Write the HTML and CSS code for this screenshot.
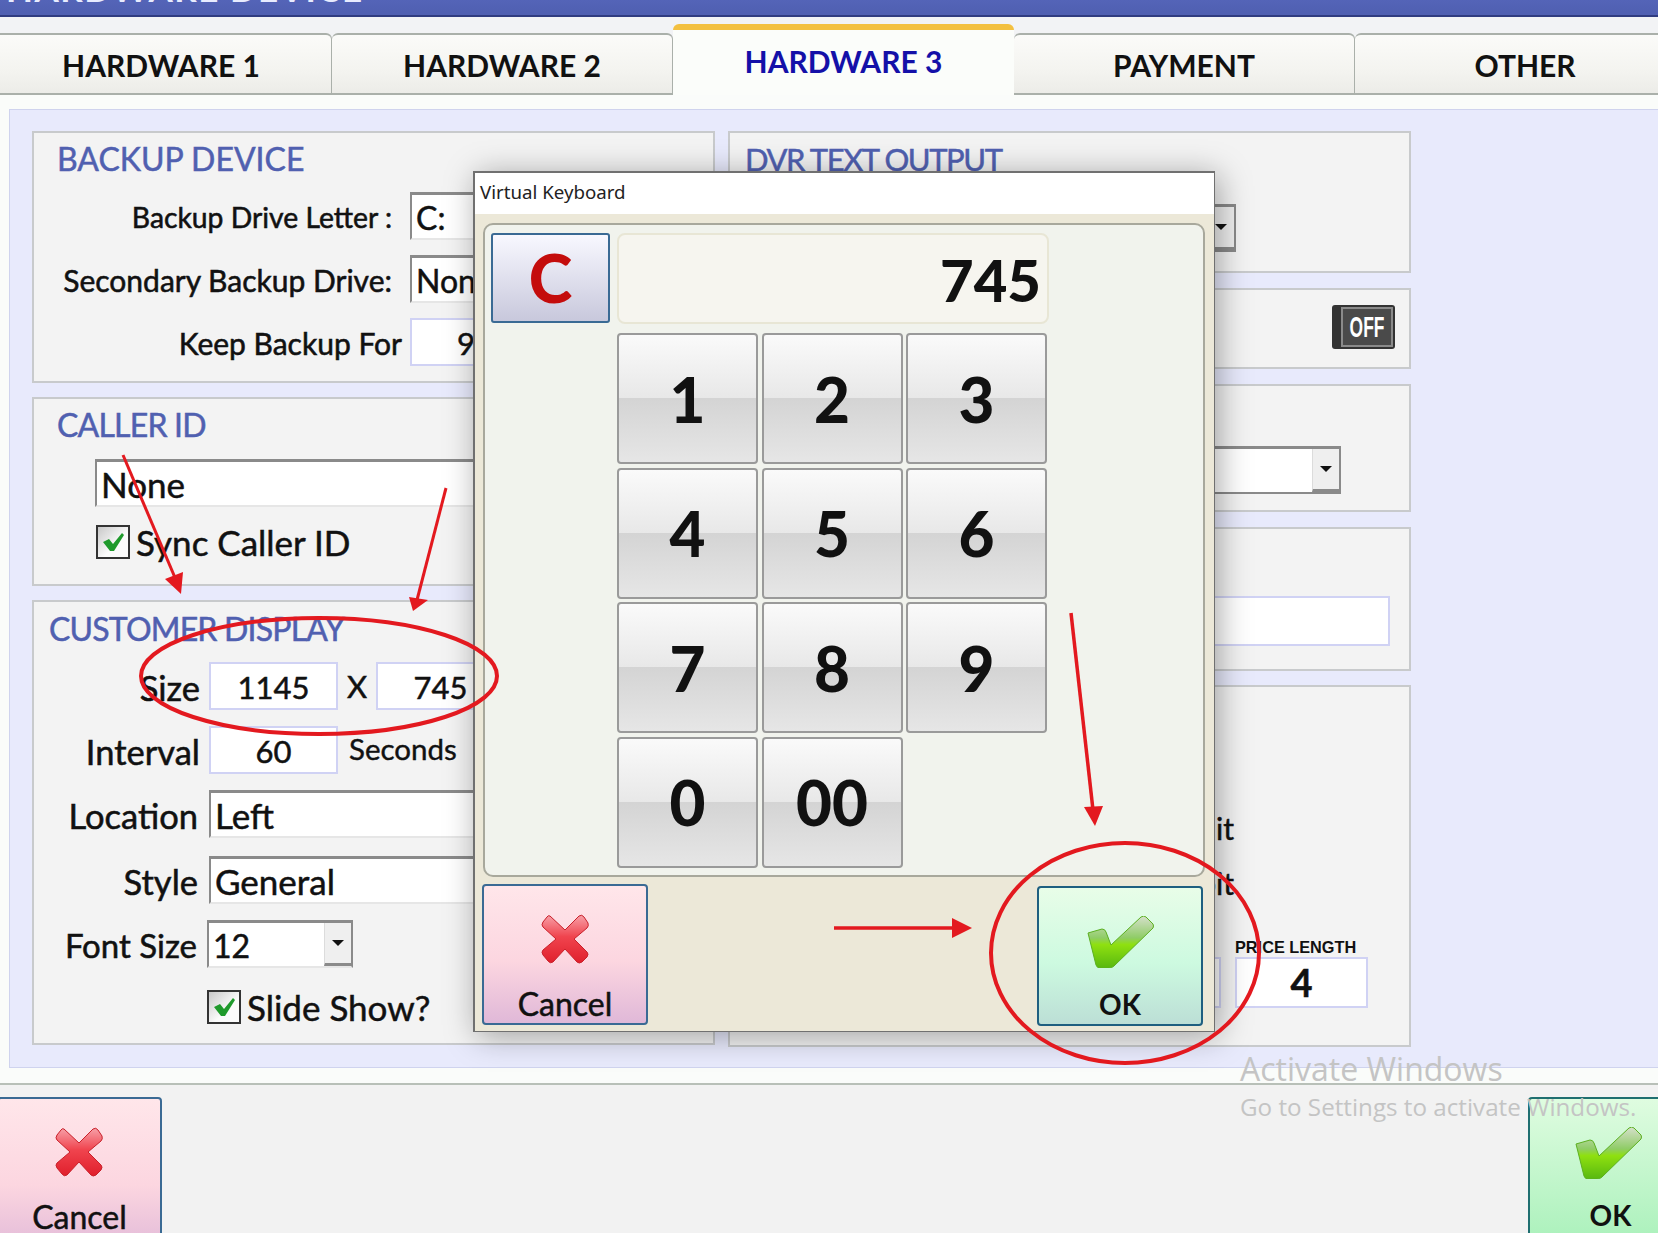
FILE: index.html
```html
<!DOCTYPE html>
<html lang="en">
<head>
<meta charset="utf-8">
<title>Hardware Settings</title>
<link rel="stylesheet" href="styles.css">
</head>
<body>
<svg class="defs" width="0" height="0" aria-hidden="true">
  <defs>
    <linearGradient id="gx" x1="0" y1="0" x2="0" y2="1">
      <stop offset="0" stop-color="#f7a0a8"/><stop offset=".45" stop-color="#f0444e"/><stop offset="1" stop-color="#e01f2c"/>
    </linearGradient>
    <linearGradient id="gc" x1="0" y1="0" x2="0" y2="1">
      <stop offset="0" stop-color="#d6e0cc"/><stop offset=".42" stop-color="#8fcc66"/><stop offset=".55" stop-color="#8fe010"/><stop offset="1" stop-color="#58b810"/>
    </linearGradient>
    <symbol id="ix" viewBox="0 0 48 50">
      <path d="M9 2 L24 16 L38 2 Q41 0 43 3 L47 9 Q48 12 46 14 L33 25 L46 38 Q48 40 46 43 L41 48 Q38 50 36 48 L24 35 L12 48 Q9 50 7 47 L2 41 Q0 38 2 36 L15 25 L2 13 Q0 11 2 8 L6 3 Q7 1 9 2 Z" fill="url(#gx)" stroke="#c8202a" stroke-width="1"/>
    </symbol>
    <symbol id="ic" viewBox="0 0 67 52">
      <path d="M1 17 L15 13 Q18 13 19 16 L24 29 L54 1 Q57 -1 59 1 L66 8 Q67 10 66 12 L27 50 Q25 52 22 52 L13 52 Q10 52 9 49 Z" fill="url(#gc)" stroke="#5cb020" stroke-width="1"/>
    </symbol>
    <symbol id="ick" viewBox="0 0 24 22">
      <path d="M2 11 L8 8 L12 13 L21 2 L23 4 L13 20 L9 20 Z" fill="#1f9a2c"/>
    </symbol>
  </defs>
</svg>

<header class="topbar"><span class="topbar-title">HARDWARE DEVICE</span></header>

<nav class="tabs">
  <div class="tab">HARDWARE 1</div>
  <div class="tab">HARDWARE 2</div>
  <div class="tab tab-active">HARDWARE 3</div>
  <div class="tab">PAYMENT</div>
  <div class="tab">OTHER</div>
</nav>

<main class="content">
  <div class="panel">
    <div class="col">
      <section class="box box-backup">
        <h2 class="box-title">BACKUP DEVICE</h2>
        <div class="stack">
          <div class="row row-tall">
            <span class="lbl lbl-wide lbl-inset lbl-first">Backup Drive Letter :</span>
            <span class="select select-long">C:</span>
          </div>
          <div class="row row-tall">
            <span class="lbl lbl-wide lbl-inset lbl-big">Secondary Backup Drive:</span>
            <span class="select select-long">None</span>
          </div>
          <div class="row row-tall">
            <span class="lbl lbl-wide lbl-big">Keep Backup For</span>
            <span class="field field-long">90</span>
          </div>
        </div>
      </section>

      <section class="box box-caller">
        <h2 class="box-title title-tight">CALLER ID</h2>
        <span class="select select-caller select-lg">None</span>
        <label class="check check-caller">
          <span class="checkbox"><svg class="tick"><use href="#ick"/></svg></span>
          <span class="check-text">Sync Caller ID</span>
        </label>
      </section>

      <section class="box box-customer">
        <h2 class="box-title box-title-near title-tight">CUSTOMER DISPLAY</h2>
        <div class="row">
          <span class="lbl lbl-sm">Size</span>
          <span class="field">1145</span>
          <span class="times">X</span>
          <span class="field">745</span>
        </div>
        <div class="row mt16">
          <span class="lbl lbl-sm">Interval</span>
          <span class="field">60</span>
          <span class="seconds">Seconds</span>
        </div>
        <div class="row mt16">
          <span class="lbl lbl-sm lbl-pad">Location</span>
          <span class="select select-long select-lg">Left</span>
        </div>
        <div class="row mt18">
          <span class="lbl lbl-sm lbl-pad">Style</span>
          <span class="select select-long select-lg">General</span>
        </div>
        <div class="row mt16">
          <span class="lbl lbl-sm lbl-pad lbl-font">Font Size</span>
          <span class="select select-font">12<span class="drop"><i class="caret"></i></span></span>
        </div>
        <label class="check check-slide">
          <span class="checkbox"><svg class="tick"><use href="#ick"/></svg></span>
          <span class="check-text">Slide Show?</span>
        </label>
      </section>
    </div>

    <div class="col col-right">
      <section class="box box-dvr">
        <h2 class="box-title box-title-near title-dvr">DVR TEXT OUTPUT</h2>
        <div class="end">
          <span class="select select-wide"><span class="drop"><i class="caret"></i></span></span>
        </div>
      </section>
      <section class="box box-toggle">
        <div class="toggle"><span class="toggle-face"><span class="toggle-text">OFF</span></span></div>
      </section>
      <section class="box box-sel">
        <span class="select select-wide"><span class="drop"><i class="caret"></i></span></span>
      </section>
      <section class="box box-text">
        <span class="field field-wide"></span>
      </section>
      <section class="box box-misc">
        <div class="misc-line">Credit</div>
        <div class="misc-line misc-line-2">Debit</div>
        <div class="price-row">
          <span class="field field-price"></span>
          <div class="price">
            <div class="price-label">PRICE LENGTH</div>
            <span class="field field-four">4</span>
          </div>
        </div>
      </section>
    </div>
  </div>
</main>

<footer class="footer">
  <button class="btn btn-cancel btn-foot-left"><svg class="ico-x"><use href="#ix"/></svg><span>Cancel</span></button>
  <button class="btn btn-ok-foot btn-foot-right"><svg class="ico-c"><use href="#ic"/></svg><span class="ok-text">OK</span></button>
</footer>

<div class="activate">
  <div class="activate-1">Activate Windows</div>
  <div class="activate-2">Go to Settings to activate Windows.</div>
</div>

<div class="dialog">
  <div class="dialog-title">Virtual Keyboard</div>
  <div class="pad">
    <button class="key-c">C</button>
    <div class="pad-main">
      <div class="display">745</div>
      <div class="keys">
        <button class="key">1</button><button class="key">2</button><button class="key">3</button>
        <button class="key">4</button><button class="key">5</button><button class="key">6</button>
        <button class="key">7</button><button class="key">8</button><button class="key">9</button>
        <button class="key">0</button><button class="key">00</button>
      </div>
    </div>
  </div>
  <div class="dialog-actions">
    <button class="btn btn-cancel btn-dlg"><svg class="ico-x"><use href="#ix"/></svg><span>Cancel</span></button>
    <button class="btn btn-ok btn-dlg"><svg class="ico-c"><use href="#ic"/></svg><span class="ok-text">OK</span></button>
  </div>
</div>

<svg class="marks" width="1658" height="1233" viewBox="0 0 1658 1233" aria-hidden="true">
  <g fill="none" stroke="#e3191f">
    <ellipse cx="319" cy="676" rx="178" ry="58" stroke-width="4"/>
    <ellipse cx="1125" cy="953" rx="134" ry="110" stroke-width="4"/>
    <path d="M123 455 L176 580" stroke-width="3"/>
    <path d="M446 488 L417 600" stroke-width="3"/>
    <path d="M1071 613 L1093 810" stroke-width="3.5"/>
    <path d="M834 928 L955 928" stroke-width="3.5"/>
  </g>
  <g fill="#e3191f">
    <path d="M181 594 L165 579 L183 572 Z"/>
    <path d="M413 611 L409 597 L428 600 Z"/>
    <path d="M1095 826 L1084 807 L1103 806 Z"/>
    <path d="M972 928 L952 918 L952 938 Z"/>
  </g>
</svg>
</body>
</html>
```
FILE: styles.css
```css
* { box-sizing: border-box; }
html, body { margin: 0; padding: 0; }
body {
  width: 1658px;
  height: 1233px;
  overflow: hidden;
  position: relative;
  background: #f2f2f2;
  font-family: "Lato", "Liberation Sans", sans-serif;
  color: #111;
}
.defs { position: absolute; }

.topbar {
  height: 17px;
  background: linear-gradient(#5464b8, #5060b2 80%);
  border-bottom: 2px solid #303c80;
  overflow: hidden;
  padding-left: 6px;
}
.topbar-title {
  display: block;
  margin-top: -27px;
  font-size: 35px;
  line-height: 30px;
  font-weight: 700;
  letter-spacing: 1.5px;
  color: #e8ecff;
}

.tabs {
  height: 78px;
  display: flex;
  align-items: flex-end;
  margin-left: -9px;
  background: #f2f3f5;
}
.tab {
  flex: 0 0 341px;
  height: 62px;
  border: 1px solid #aab0aa;
  border-width: 2px 1px 2px 0;
  border-radius: 6px 6px 0 0;
  background: linear-gradient(#fbfbf9, #f4f4f0 60%, #ecece8);
  font-size: 30px;
  font-weight: 700;
  line-height: 60px;
  text-align: center;
  color: #111;
}
.tab-active {
  height: 71px;
  background: #fbfdfa;
  border: 0;
  border-top: 6px solid #f3c040;
  color: #1410a8;
  line-height: 62px;
}

.content {
  height: 988px;
  background: #fafcfa;
  padding: 14px 0 15px 9px;
}
.panel {
  height: 959px;
  background: #e8eafc;
  border: 1px solid #cfd3ee;
  border-right: 0;
  padding: 21px 0 0 22px;
  display: flex;
  gap: 13px;
}
.col { width: 683px; display: flex; flex-direction: column; gap: 14px; flex: none; }
.col-right { gap: 15px; }

.box {
  background: #f3f3f3;
  border: 2px solid #c8cacc;
  padding: 7px 0 0;
  overflow: hidden;
}
.box-backup { height: 252px; }
.box-caller { height: 189px; }
.box-customer { height: 445px; padding-top: 8px; }
.box-dvr { height: 142px; }
.box-toggle { height: 81px; display: flex; justify-content: flex-end; padding: 15px 14px 0 0; }
.box-sel { height: 128px; padding: 60px 68px 0 0; display: flex; justify-content: flex-end; align-items: flex-start; }
.box-text { height: 144px; padding: 67px 19px 0 0; display: flex; justify-content: flex-end; align-items: flex-start; }
.box-misc { height: 362px; padding-top: 121px; margin-top: -1px; }

.box-title {
  margin: 0;
  padding-left: 23px;
  height: 38px;
  font-size: 32px;
  line-height: 38px;
  font-weight: 400;
  color: #5060b0;
  -webkit-text-stroke: .5px #5060b0;
}
.title-tight { letter-spacing: -.8px; }
.box-title-near { padding-left: 15px; margin-bottom: 14px; }
.title-dvr { margin-bottom: 0; font-size: 31px; letter-spacing: -1.4px; }

.stack { display: flex; flex-direction: column; gap: 14px; margin-top: 13px; }
.row { display: flex; align-items: center; height: 48px; }
.row-tall { height: 49px; }
.mt16 { margin-top: 16px; }
.mt18 { margin-top: 18px; }

.lbl {
  flex: none;
  font-size: 28px;
  font-weight: 400;
  text-align: right;
  white-space: nowrap;
  padding-top: 2px;
  -webkit-text-stroke: .55px #111;
}
.lbl-first { font-size: 28.3px; }
.lbl-big { font-size: 30px; }
.lbl-wide { width: 368px; margin-right: 8px; }
.lbl-inset { padding-right: 10px; }
.lbl-sm { width: 166px; margin-right: 9px; font-size: 34.5px; }
.lbl-pad { padding-right: 2px; }
.lbl-font { padding-right: 3px; font-size: 33px; }

.field {
  flex: none;
  display: block;
  width: 129px;
  height: 48px;
  background: #fff;
  border: 2px solid #d0d2f4;
  font-size: 31px;
  font-weight: 400;
  line-height: 46px;
  text-align: center;
  -webkit-text-stroke: .5px #111;
}
.field-long { width: 130px; }
.field-wide { width: 500px; height: 50px; }
.times { flex: none; width: 38px; text-align: center; font-size: 31px; -webkit-text-stroke: .5px #111; }
.seconds { flex: none; margin: -4px 0 0 11px; font-size: 29.5px; -webkit-text-stroke: .4px #111; }

.select {
  position: relative;
  display: block;
  flex: none;
  height: 48px;
  background: #fff;
  border-top: 3px solid #8a8a8a;
  border-left: 2px solid #8a8a8a;
  border-bottom: 2px solid #e6e6e6;
  border-right: 2px solid #e6e6e6;
  padding-left: 4px;
  font-size: 32px;
  line-height: 46px;
  -webkit-text-stroke: .5px #111;
}
.select-lg { font-size: 35px; line-height: 44px; }
.select-long { width: 400px; }
.select-caller { width: 560px; margin: 15px 0 0 61px; }
.select-font {
  width: 146px;
  border-right-color: #8a8a8a;
  margin-left: -2px;
}
.select-wide {
  width: 400px;
  height: 48px;
  border-right-color: #8a8a8a;
  border-bottom-color: #8a8a8a;
}
.drop {
  position: absolute;
  right: 0;
  top: 0;
  bottom: 0;
  width: 27px;
  background: #efefef;
  border-left: 1px solid #dcdcdc;
  border-bottom: 3px solid #8a8a8a;
  display: flex;
  align-items: center;
  justify-content: center;
}
.caret {
  width: 0;
  height: 0;
  border-left: 6px solid transparent;
  border-right: 6px solid transparent;
  border-top: 6px solid #111;
}

.end { display: flex; justify-content: flex-end; padding: 26px 173px 0 0; }

.check { display: flex; align-items: center; gap: 8px; }
.check-caller { margin: 18px 0 0 62px; }
.check-slide { margin: 22px 0 0 173px; }
.checkbox {
  flex: none;
  width: 34px;
  height: 34px;
  border: 2px solid #333;
  background: linear-gradient(135deg, #c8c8c8, #fbfbfb 60%);
  display: flex;
  align-items: center;
  justify-content: center;
}
.tick { width: 24px; height: 24px; }
.check-text { font-size: 35px; line-height: 34px; margin-left: -2px; white-space: nowrap; -webkit-text-stroke: .5px #111; }

.toggle {
  width: 63px;
  height: 44px;
  background: #333;
  border-radius: 3px;
  padding: 2px 2px 2px 9px;
}
.toggle-face {
  display: flex;
  justify-content: center;
  height: 40px;
  background: #4a4a4a;
  border: 2px solid #8a8a8a;
  color: #fff;
  font-family: "Liberation Sans", sans-serif;
  font-size: 30px;
  font-weight: 700;
  line-height: 36px;
  overflow: hidden;
}
.toggle-text { display: block; flex: none; transform: scaleX(.58); }

.misc-line {
  height: 40px;
  padding-right: 175px;
  text-align: right;
  font-size: 30px;
  line-height: 40px;
  -webkit-text-stroke: .5px #111;
}
.misc-line-2 { margin-top: 15px; }
.price-row { display: flex; justify-content: flex-end; align-items: flex-end; gap: 14px; padding-right: 41px; margin-top: 34px; }
.field-price { width: 130px; height: 51px; }
.price { width: 133px; }
.price-label { font-family: "Liberation Sans", sans-serif; font-size: 16.3px; font-weight: 700; line-height: 20px; white-space: nowrap; }
.field-four { width: 133px; height: 51px; font-size: 38px; font-weight: 700; line-height: 47px; }

.footer {
  height: 150px;
  border-top: 2px solid #b8c0b8;
  background: #f2f2f2;
  padding-top: 12px;
  display: flex;
  justify-content: space-between;
  margin: 0 -35px 0 -3px;
}

.btn {
  flex: none;
  display: flex;
  flex-direction: column;
  align-items: center;
  padding: 0;
  width: 165px;
  height: 141px;
  border: 2px solid #3a6a94;
  border-radius: 4px;
  font-family: "Lato", "Liberation Sans", sans-serif;
  font-size: 32px;
  color: #111;
}
.btn-dlg { width: 166px; }
.btn span { -webkit-text-stroke: .5px #111; line-height: 34px; margin-top: -2px; }
.btn .ok-text { font-size: 28px; font-weight: 700; -webkit-text-stroke: 0; }
.btn-cancel { background: linear-gradient(#ffe6ea, #fcd6e0 55%, #e0b8d8); }
.btn-ok { background: linear-gradient(#e8fde8, #cdfae0 55%, #bcdfd6); border-color: #1f5f80; height: 140px; margin-top: 2px; }
.btn-ok-foot { background: linear-gradient(#dffce0, #a6f0b8); border-color: #1f6f70; }
.btn-foot-right, .btn-foot-left { height: 160px; }
.btn-foot-left .ico-x { margin-left: -2px; }
.btn-foot-right .ico-c { margin-left: -4px; }
.ico-x { width: 48px; height: 50px; margin-top: 28px; margin-bottom: 25px; }
.ico-c { width: 67px; height: 52px; margin: 28px 0 21px; }

.activate {
  position: absolute;
  left: 1240px;
  top: 1048px;
  color: #c4c4c4;
  font-family: "Open Sans", sans-serif;
  white-space: nowrap;
}
.activate-1 { font-size: 32px; line-height: 42px; }
.activate-2 { font-size: 24.2px; line-height: 32px; margin-top: 1px; }

.dialog {
  position: absolute;
  left: 473px;
  top: 171px;
  width: 742px;
  height: 861px;
  background: #ece8d8;
  border: 1px solid #707070;
  border-width: 2px 1px 1px 2px;
  box-shadow: 4px 4px 30px rgba(0, 0, 0, .35);
}
.dialog-title {
  height: 41px;
  background: #fff;
  padding-left: 5px;
  font-family: "Noto Sans", sans-serif;
  font-size: 18.7px;
  line-height: 38px;
  color: #222;
}
.pad {
  margin: 9px 9px 0 8px;
  height: 654px;
  background: #f1f3ed;
  border: 2px solid #a8a89c;
  border-radius: 10px;
  padding: 8px 0 0 6px;
  display: flex;
  gap: 7px;
  align-items: flex-start;
}
.key-c {
  flex: none;
  width: 119px;
  height: 90px;
  padding: 0;
  border: 2px solid #3a6a94;
  border-radius: 3px;
  background: linear-gradient(#f8f8ff, #c8c8dc);
  color: #c40c0c;
  font-family: "Lato", sans-serif;
  font-size: 66px;
  font-weight: 900;
  line-height: 80px;
}
.pad-main { flex: none; width: 432px; }
.display {
  height: 91px;
  background: #f6f5ef;
  border: 2px solid #e8e6d5;
  border-radius: 8px;
  padding-right: 6px;
  text-align: right;
  font-size: 58px;
  font-weight: 900;
  line-height: 89px;
}
.keys {
  margin-top: 9px;
  display: grid;
  grid-template-columns: repeat(3, 141px);
  grid-auto-rows: 131px;
  gap: 3.5px;
}
.key {
  padding: 0;
  border: 2px solid #9a9a9a;
  border-radius: 4px;
  background: linear-gradient(#fafafa, #e8e8e8 49.5%, #d4d4d4 50%, #e6e6e6);
  color: #111;
  font-family: "Lato", sans-serif;
  font-size: 62px;
  font-weight: 900;
}
.dialog-actions {
  display: flex;
  justify-content: space-between;
  align-items: flex-start;
  margin-top: 7px;
  padding: 0 11px 0 7px;
}

.marks { position: absolute; left: 0; top: 0; pointer-events: none; }
```
